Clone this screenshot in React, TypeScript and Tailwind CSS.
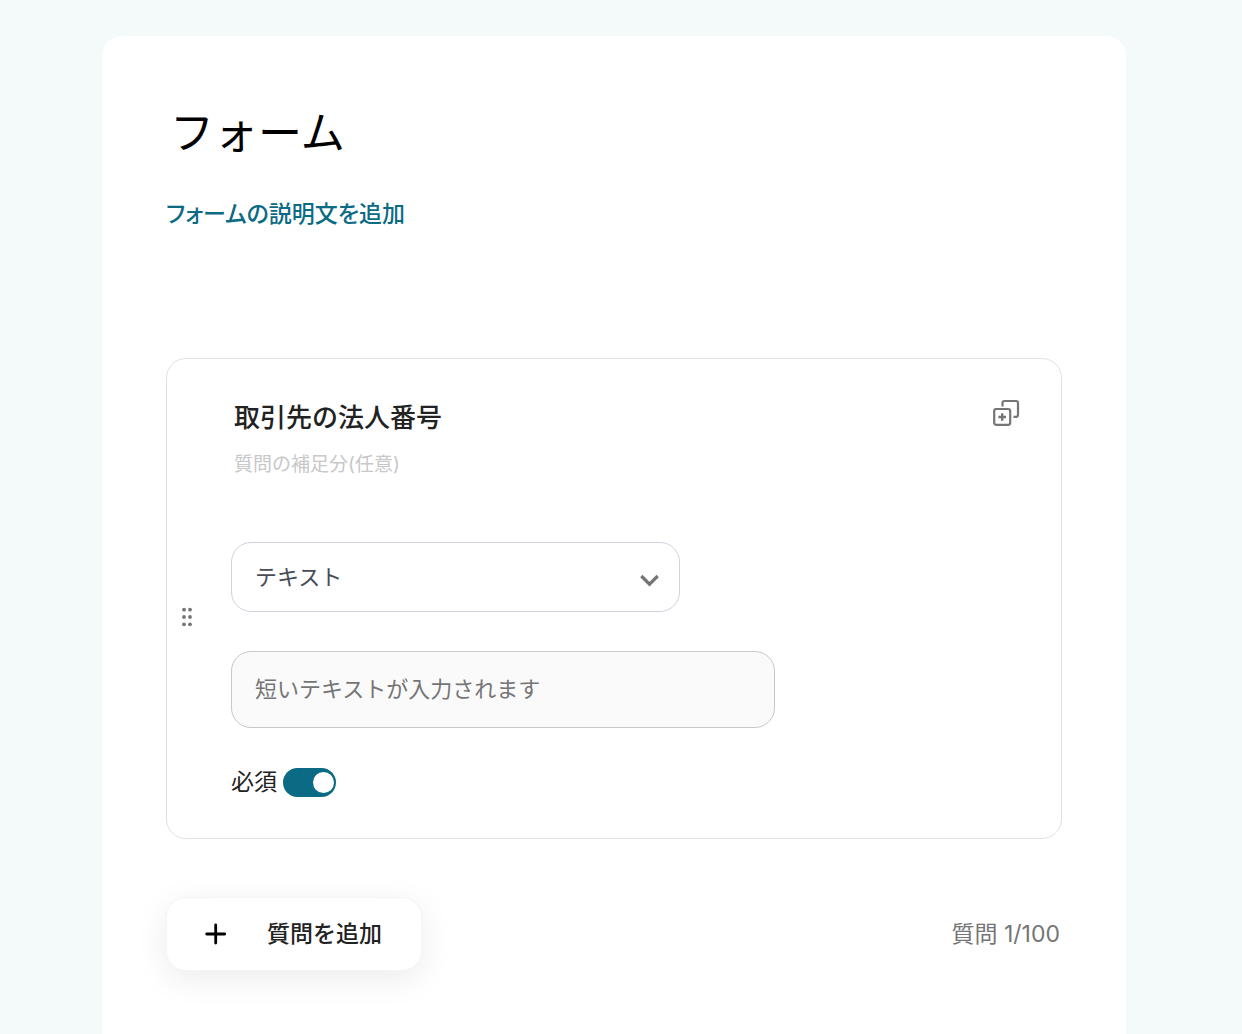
import React, { useState } from 'react';

const AnswerTypes = ['テキスト', '段落', 'ラジオボタン', 'チェックボックス'];

const App = () => {
  const [title, setTitle] = useState('フォーム');
  const [question, setQuestion] = useState('取引先の法人番号');
  const [required, setRequired] = useState(true);

  return (
    <div className="min-h-screen bg-[#f4fafa] pt-9 pr-[14px] font-['Inter','Noto_Sans_CJK_JP',sans-serif] text-[#222222]">
      <main className="mx-auto min-h-[calc(100vh-36px)] max-w-5xl rounded-t-[20px] bg-white px-16 pt-16 pb-16">
        <input
          aria-label="フォームのタイトル"
          value={title}
          onChange={(e) => setTitle(e.target.value)}
          className="block h-[66px] w-full px-1 text-[44px] text-black outline-none"
        />
        <button
          type="button"
          className="mt-8 block h-8 text-[23px] leading-8 font-medium text-[#0b6b84] [font-feature-settings:'palt']"
        >
          フォームの説明文を追加
        </button>

        <section className="mt-32 flex rounded-[20px] border border-[#e1e1e1] pt-9 pr-[41px] pb-[41px]">
          <div className="flex w-16 shrink-0 items-center pt-[42px] pl-[14px]">
            <GripIcon />
          </div>
          <div className="min-w-0 flex-1">
            <div className="flex items-start gap-4">
              <div className="min-w-0 flex-1 pl-[3px]">
                <input
                  aria-label="質問"
                  value={question}
                  onChange={(e) => setQuestion(e.target.value)}
                  className="block h-10 w-full text-[26px] font-medium outline-none"
                />
                <input
                  aria-label="質問の補足分"
                  placeholder="質問の補足分(任意)"
                  className="mt-3 block h-[34px] w-full text-[19px] outline-none placeholder:text-[#c8c8c8]"
                />
              </div>
              <button type="button" aria-label="質問を複製" className="mt-1">
                <DuplicateIcon />
              </button>
            </div>

            <div className="relative mt-[61px] h-[70px] max-w-[449px]">
              <select
                aria-label="回答の種類"
                className="h-full w-full appearance-none rounded-[20px] border border-[#d0d3de] bg-white px-[23px] text-[22px] text-[#474d57] outline-none"
              >
                {AnswerTypes.map((type) => (
                  <option key={type}>{type}</option>
                ))}
              </select>
              <ChevronIcon />
            </div>

            <input
              aria-label="回答"
              placeholder="短いテキストが入力されます"
              disabled
              className="mt-[39px] block h-[77px] w-full max-w-[544px] rounded-[20px] border border-[#c8c8c8] bg-[#fafafa] px-[23px] pb-[2px] text-[22px] placeholder:text-[#757575]"
            />

            <label className="mt-10 flex h-[29px] w-fit items-center gap-[6px] text-[23px]">
              必須
              <input
                type="checkbox"
                role="switch"
                checked={required}
                onChange={(e) => setRequired(e.target.checked)}
                className="flex h-[29px] w-[53px] appearance-none items-center rounded-full bg-[#c8c8c8] px-[2px] before:size-[21px] before:rounded-full before:bg-white checked:justify-end checked:bg-[#0b6b84]"
              />
            </label>
          </div>
        </section>

        <div className="mt-[58px] flex items-center justify-between">
          <button
            type="button"
            className="flex h-[74px] w-64 items-center gap-10 rounded-[20px] border border-[#f5f5f5] bg-white pl-9 text-[23px] font-medium shadow-[0_8px_32px_rgba(0,0,0,0.08)]"
          >
            <PlusIcon />
            質問を追加
          </button>
          <p className="pr-[2px] text-[23px] text-[#757575]">質問 1/100</p>
        </div>
      </main>
    </div>
  );
};

const GripIcon = () => (
  <svg width="12" height="20" viewBox="0 0 12 20" fill="#757575" aria-hidden="true">
    {[2.7, 10, 17.3].map((y) => (
      <g key={y}>
        <circle cx="3" cy={y} r="1.9" />
        <circle cx="9" cy={y} r="1.9" />
      </g>
    ))}
  </svg>
);

const DuplicateIcon = () => (
  <svg width="28" height="28" viewBox="0 0 28 28" fill="none" stroke="#757575" strokeWidth="2.2" aria-hidden="true">
    <rect x="2.2" y="10" width="16" height="15.8" rx="2" />
    <path d="M10.500 7.500V4a2 2 0 0 1 2-2H24a2 2 0 0 1 2 2v11.800a2 2 0 0 1-2 2H21.500" />
    <path d="M10.200 14.200v7.600M6.400 18h7.600" strokeWidth="2.400" />
  </svg>
);

const ChevronIcon = () => (
  <svg
    className="pointer-events-none absolute top-1/2 right-5 mt-[-3px]"
    width="21"
    height="14"
    viewBox="0 0 21 14"
    fill="none"
    stroke="#757575"
    strokeWidth="3.200"
    aria-hidden="true"
  >
    <path d="M2.300 2l8.200 8.200L18.700 2" />
  </svg>
);

const PlusIcon = () => (
  <svg width="24" height="24" viewBox="0 0 24 24" fill="none" stroke="#000" strokeWidth="2.800" strokeLinecap="round" aria-hidden="true">
    <path d="M12.700 3v18M3.700 12h18" />
  </svg>
);

export default App;
